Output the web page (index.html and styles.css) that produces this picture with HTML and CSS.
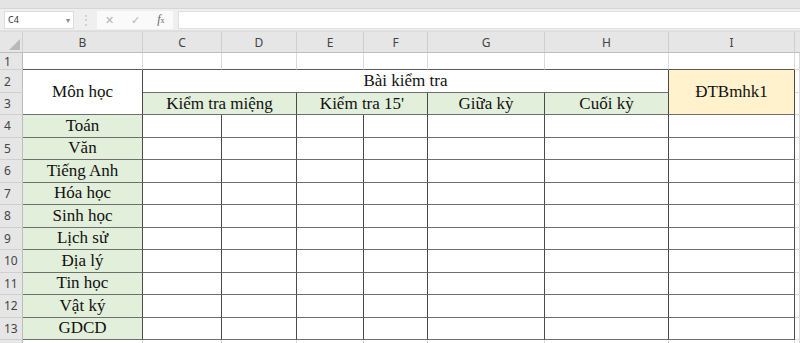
FILE: index.html
```html
<!DOCTYPE html>
<html>

<head>
  <meta name="viewport" content="width=device-width, initial-scale=1">
  <link rel="stylesheet" href="styles.css">
</head>

<body>

  <div class="ribbon"></div>

  <div class="formula-bar">
    <div class="name-box"><span>C4</span><span class="caret">&#9662;</span></div>
    <div class="grip">&#8942;</div>
    <div class="fx-tools">
      <span class="tool">&#10005;</span>
      <span class="tool">&#10003;</span>
      <span class="tool fx"><i>f</i><small>x</small></span>
    </div>
    <div class="formula-input"></div>
  </div>

  <div class="sheet">
    <!-- column headers -->
    <div class="corner"><span class="tri"></span></div>
    <div class="col-hd">B</div>
    <div class="col-hd">C</div>
    <div class="col-hd">D</div>
    <div class="col-hd">E</div>
    <div class="col-hd">F</div>
    <div class="col-hd">G</div>
    <div class="col-hd">H</div>
    <div class="col-hd">I</div>
    <div class="col-hd last"></div>

    <!-- row 1 -->
    <div class="row-hd">1</div>
    <div class="cell top"></div>
    <div class="cell top"></div>
    <div class="cell top"></div>
    <div class="cell top"></div>
    <div class="cell top"></div>
    <div class="cell top"></div>
    <div class="cell top"></div>
    <div class="cell top"></div>
    <div class="cell"></div>

    <!-- rows 2-3 -->
    <div class="row-hd">2</div>
    <div class="cell box tall">Môn học</div>
    <div class="cell box wide6">Bài kiểm tra</div>
    <div class="cell box tall yellow">ĐTBmhk1</div>
    <div class="cell"></div>

    <div class="row-hd">3</div>
    <div class="cell box wide2 green">Kiểm tra miệng</div>
    <div class="cell box wide2 green">Kiểm tra 15'</div>
    <div class="cell box green">Giữa kỳ</div>
    <div class="cell box green">Cuối kỳ</div>
    <div class="cell"></div>

    <!-- rows 4-13 -->
    <div class="row-hd">4</div>
    <div class="cell box green">Toán</div>
    <div class="cell box"></div><div class="cell box"></div><div class="cell box"></div><div class="cell box"></div>
    <div class="cell box"></div><div class="cell box"></div><div class="cell box"></div>
    <div class="cell"></div>

    <div class="row-hd">5</div>
    <div class="cell box green">Văn</div>
    <div class="cell box"></div><div class="cell box"></div><div class="cell box"></div><div class="cell box"></div>
    <div class="cell box"></div><div class="cell box"></div><div class="cell box"></div>
    <div class="cell"></div>

    <div class="row-hd">6</div>
    <div class="cell box green">Tiếng Anh</div>
    <div class="cell box"></div><div class="cell box"></div><div class="cell box"></div><div class="cell box"></div>
    <div class="cell box"></div><div class="cell box"></div><div class="cell box"></div>
    <div class="cell"></div>

    <div class="row-hd">7</div>
    <div class="cell box green">Hóa học</div>
    <div class="cell box"></div><div class="cell box"></div><div class="cell box"></div><div class="cell box"></div>
    <div class="cell box"></div><div class="cell box"></div><div class="cell box"></div>
    <div class="cell"></div>

    <div class="row-hd">8</div>
    <div class="cell box green">Sinh học</div>
    <div class="cell box"></div><div class="cell box"></div><div class="cell box"></div><div class="cell box"></div>
    <div class="cell box"></div><div class="cell box"></div><div class="cell box"></div>
    <div class="cell"></div>

    <div class="row-hd">9</div>
    <div class="cell box green">Lịch sử</div>
    <div class="cell box"></div><div class="cell box"></div><div class="cell box"></div><div class="cell box"></div>
    <div class="cell box"></div><div class="cell box"></div><div class="cell box"></div>
    <div class="cell"></div>

    <div class="row-hd">10</div>
    <div class="cell box green">Địa lý</div>
    <div class="cell box"></div><div class="cell box"></div><div class="cell box"></div><div class="cell box"></div>
    <div class="cell box"></div><div class="cell box"></div><div class="cell box"></div>
    <div class="cell"></div>

    <div class="row-hd">11</div>
    <div class="cell box green">Tin học</div>
    <div class="cell box"></div><div class="cell box"></div><div class="cell box"></div><div class="cell box"></div>
    <div class="cell box"></div><div class="cell box"></div><div class="cell box"></div>
    <div class="cell"></div>

    <div class="row-hd">12</div>
    <div class="cell box green">Vật ký</div>
    <div class="cell box"></div><div class="cell box"></div><div class="cell box"></div><div class="cell box"></div>
    <div class="cell box"></div><div class="cell box"></div><div class="cell box"></div>
    <div class="cell"></div>

    <div class="row-hd">13</div>
    <div class="cell box green">GDCD</div>
    <div class="cell box"></div><div class="cell box"></div><div class="cell box"></div><div class="cell box"></div>
    <div class="cell box"></div><div class="cell box"></div><div class="cell box"></div>
    <div class="cell"></div>

    <!-- row 14, cut off by the window -->
    <div class="row-hd cut"></div>
    <div class="cell"></div><div class="cell"></div><div class="cell"></div><div class="cell"></div>
    <div class="cell"></div><div class="cell"></div><div class="cell"></div><div class="cell"></div>
    <div class="cell"></div>
  </div>

</body>

</html>
```

FILE: styles.css
```css
body {
  margin: 0;
  width: 800px;
  height: 343px;
  overflow: hidden;
  background: #fff;
  font-family: "Noto Sans", "Open Sans", sans-serif;
}

.ribbon {
  height: 8px;
  background: #e4e4e4;
  border-bottom: 1px solid #d6d6d6;
}

.formula-bar {
  display: flex;
  align-items: center;
  height: 21px;
  padding: 0 0 0 4px;
  background: #efefef;
  border-bottom: 1px solid #e0e0e0;
}

.name-box {
  display: flex;
  justify-content: space-between;
  align-items: center;
  box-sizing: border-box;
  width: 70px;
  height: 18px;
  padding: 0 3px;
  background: #fff;
  border: 1px solid #dcdcdc;
  font-size: 9px;
  color: #333;
}

.name-box .caret {
  font-size: 8px;
  color: #888;
}

.grip {
  width: 23px;
  text-align: center;
  font-size: 12px;
  color: #c4c4c4;
}

.fx-tools {
  display: flex;
  align-items: center;
  justify-content: space-around;
  box-sizing: border-box;
  width: 76px;
  height: 18px;
  background: #fafafa;
}

.tool {
  font-size: 11px;
  color: #b5b5b5;
}

.tool.fx {
  font-family: "Liberation Serif", serif;
  font-size: 12px;
  color: #666;
}

.tool.fx small {
  font-size: 8px;
}

.formula-input {
  flex: 1;
  height: 18px;
  margin-left: 5px;
  box-sizing: border-box;
  background: #fff;
  border: 1px solid #e0e0e0;
  border-right: 0;
}

.sheet {
  display: grid;
  grid-template-columns: 23px 120px 79px 75px 67px 64px 117px 124px 126px 1fr;
  grid-template-rows: 21px 17px 23px 22px repeat(10, 22.5px) 22px;
  border-top: 1px solid #dcdcdc;
}

.corner,
.col-hd {
  box-sizing: border-box;
  background: #e6e6e6;
  border-right: 1px solid #cfcfcf;
  border-bottom: 1px solid #bdbdbd;
}

.corner {
  position: relative;
}

.corner .tri {
  position: absolute;
  right: 2px;
  bottom: 2px;
  width: 0;
  height: 0;
  border-left: 11px solid transparent;
  border-bottom: 11px solid #b9b9b9;
}

.col-hd {
  display: flex;
  align-items: center;
  justify-content: center;
  font-size: 12px;
  color: #444;
}

.col-hd.last {
  border-right: 0;
}

.row-hd {
  box-sizing: border-box;
  display: flex;
  align-items: center;
  padding-left: 4px;
  background: #e6e6e6;
  border-right: 1px solid #bdbdbd;
  border-bottom: 1px solid #d0d0d0;
  font-size: 12px;
  color: #444;
}

.cell {
  box-sizing: border-box;
  display: flex;
  align-items: center;
  justify-content: center;
  border-right: 1px solid #dadada;
  border-bottom: 1px solid #dadada;
  font-family: "Liberation Serif", "Times New Roman", serif;
  font-size: 17px;
  color: #111;
}

.cell.top {
  border-bottom-color: #5a5a5a;
}

.cell.box {
  border-right-color: #4a4a4a;
  border-bottom-color: #6e6e6e;
}

.tall {
  grid-row: span 2;
}

.wide2 {
  grid-column: span 2;
}

.wide6 {
  grid-column: span 6;
}

.green {
  background: #e2efda;
}

.yellow {
  background: #fff2cc;
}
```
